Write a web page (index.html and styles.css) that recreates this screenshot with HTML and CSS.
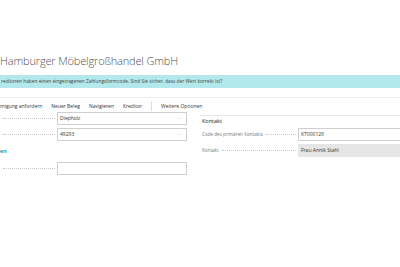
FILE: index.html
```html
<!DOCTYPE html>
<html lang="de">
<head>
    <meta charset="UTF-8">
    <meta name="viewport" content="width=device-width, initial-scale=1.0">
    <link rel="stylesheet" href="styles.css">
    <title>Kreditor - Hamburger Möbelgroßhandel GmbH</title>
</head>
<body>
    <div class="page">
        <h1 class="title">Hamburger Möbelgroßhandel GmbH</h1>

        <div class="banner">reditoren haben einen eingetragenen Zahlungsformcode. Sind Sie sicher, dass der Wert korrekt ist?</div>

        <div class="actions">
            <span class="action">migung anfordern</span>
            <span class="action">Neuer Beleg</span>
            <span class="action">Navigieren</span>
            <span class="action">Kreditor</span>
            <span class="sep"></span>
            <span class="action">Weitere Optionen</span>
        </div>

        <div class="content">
            <div class="col left">
                <div class="field">
                    <span class="label"></span>
                    <div class="box">Diepholz<span class="more">...</span></div>
                </div>
                <div class="field">
                    <span class="label"></span>
                    <div class="box">49293<span class="more">...</span></div>
                </div>
                <div class="group-title">en</div>
                <div class="field">
                    <span class="label"></span>
                    <div class="box"></div>
                </div>
            </div>

            <div class="col right">
                <div class="group-head">Kontakt</div>
                <div class="field">
                    <span class="label">Code des primären Kontakts</span>
                    <div class="box">KT000129</div>
                </div>
                <div class="field">
                    <span class="label">Kontakt</span>
                    <div class="box readonly">Frau Annik Stahl</div>
                </div>
            </div>
        </div>
    </div>
</body>
</html>
```

FILE: styles.css
```css
body {
    margin: 0;
    padding: 0;
    background-color: #fff;
    font-family: "Open Sans", "Noto Sans", sans-serif;
    color: #333;
    overflow: hidden;
}

.page {
    width: 400px;
    height: 267px;
    overflow: hidden;
}

.title {
    margin: 53px 0 0 0;
    height: 15px;
    font-size: 11px;
    line-height: 15px;
    font-weight: 300;
    letter-spacing: -0.15px;
    color: #505050;
    white-space: nowrap;
}

.banner {
    margin-top: 7px;
    height: 13px;
    padding-left: 1px;
    background-color: #b3e8ec;
    font-size: 4.8px;
    line-height: 13px;
    color: #444;
    white-space: nowrap;
}

.actions {
    margin-top: 9px;
    height: 12px;
    border-top: 1px solid #ececec;
    display: flex;
    align-items: flex-end;
    gap: 9px;
    font-size: 5px;
    line-height: 8px;
    color: #333;
    white-space: nowrap;
}

.sep {
    width: 1px;
    height: 10px;
    margin-bottom: -1px;
    background-color: #ddd;
}

.content {
    display: flex;
}

.col {
    display: flex;
    flex-direction: column;
}

.left {
    flex: 0 0 187px;
}

.right {
    margin: 5px 0 0 13px;
    padding-left: 2px;
    flex: 1;
    min-width: 0;
    border-top: 1px solid #e6e6e6;
}

.field {
    height: 16px;
    display: flex;
    align-items: center;
}

.label {
    flex: 1;
    display: flex;
    align-items: center;
    font-size: 4.6px;
    color: #777;
    white-space: nowrap;
}

.right .label {
    flex: 0 0 96px;
}

.label::after {
    content: "";
    flex: 1;
    margin: 1px 2px 0 3px;
    border-bottom: 1px dotted #c8c8c8;
}

.box {
    position: relative;
    flex-shrink: 0;
    width: 126px;
    height: 11px;
    border: 1px solid #cfcfcf;
    padding-left: 2px;
    font-size: 5px;
    line-height: 11px;
    color: #333;
    white-space: nowrap;
}

.right .box {
    width: 110px;
}

.box.readonly {
    background-color: #e6e6e6;
    border-color: #e6e6e6;
}

.more {
    position: absolute;
    right: 5px;
    top: -1px;
    color: #999;
    font-size: 5px;
}

.group-title {
    height: 18px;
    line-height: 18px;
    font-size: 5.5px;
    font-weight: 600;
    color: #00848c;
}

.group-head {
    height: 10px;
    line-height: 10px;
    font-size: 5.5px;
    color: #222;
}
```
